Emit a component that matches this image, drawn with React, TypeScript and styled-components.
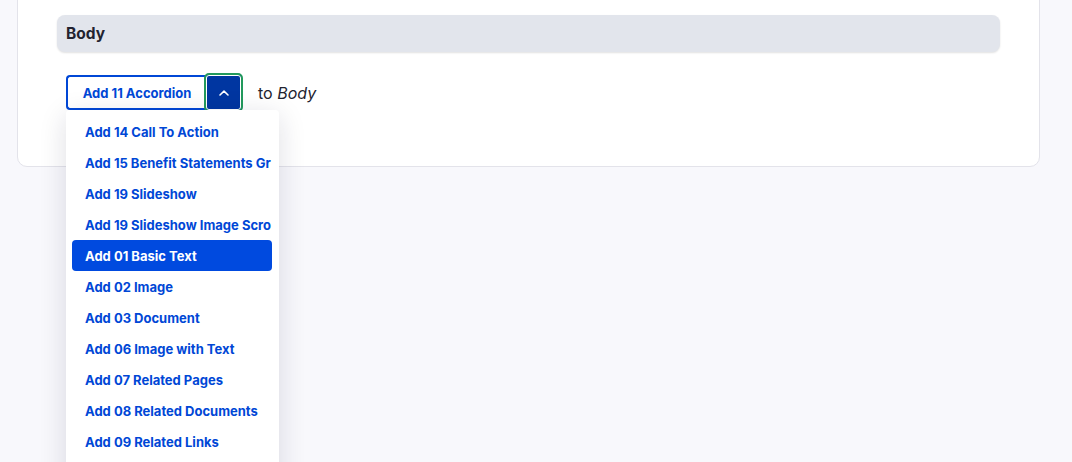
import React from "react";
import styled, { createGlobalStyle } from "styled-components";

const GlobalStyle = createGlobalStyle`
  html, body {
    margin: 0;
    padding: 0;
    background: #f8f8fc;
    font-family: Inter, "Liberation Sans", Arial, sans-serif;
    overflow: hidden;
  }
`;

const Page = styled.div`
  width: 1072px;
  height: 462px;
  overflow: hidden;
`;

const Card = styled.div`
  margin: -10px 0 0 17px;
  width: 1023px;
  box-sizing: border-box;
  background: #fff;
  border: 1px solid #e3e3ea;
  border-radius: 0 0 10px 10px;
  padding: 24px 39px 54px;
`;

const SectionHeader = styled.div`
  height: 37px;
  box-sizing: border-box;
  background: #e2e5ec;
  border-radius: 8px;
  box-shadow: 0 1px 2px rgba(0, 0, 0, 0.12);
  display: flex;
  align-items: center;
  padding-left: 9px;
  font-size: 15.5px;
  font-weight: 700;
  color: #222330;
`;

const ActionRow = styled.div`
  margin-top: 21px;
  padding-left: 9px;
  display: flex;
  align-items: center;
  position: relative;
`;

const SplitButton = styled.div`
  display: flex;
  align-items: center;
`;

const MainButton = styled.button`
  height: 35px;
  width: 140px;
  box-sizing: border-box;
  background: #fff;
  border: 2px solid #0047d6;
  border-right: none;
  border-radius: 4px 0 0 4px;
  color: #0047d6;
  font-family: inherit;
  font-size: 13px;
  font-weight: 700;
  padding: 1px 0 0 0;
  cursor: pointer;
`;

const ToggleButton = styled.button`
  width: 39px;
  height: 39px;
  box-sizing: border-box;
  margin-left: -2px;
  border: 2px solid #22995c;
  border-radius: 5px;
  background: #0036a1;
  box-shadow: inset 0 0 0 1px #fff;
  display: flex;
  align-items: center;
  justify-content: center;
  padding: 0;
  cursor: pointer;
`;

const Target = styled.span`
  margin-left: 15px;
  padding-top: 1px;
  font-size: 16px;
  color: #222330;

  em {
    font-style: italic;
  }
`;

const Menu = styled.div`
  position: absolute;
  top: 37px;
  left: 9px;
  width: 213px;
  min-height: 380px;
  box-sizing: border-box;
  background: #fff;
  border-radius: 4px;
  box-shadow: 0 6px 28px rgba(20, 20, 60, 0.14);
  padding: 6px 7px 6px 6px;
`;

const MenuItem = styled.div<{ $active?: boolean }>`
  height: 31px;
  display: flex;
  align-items: center;
  padding-left: 13px;
  border-radius: 4px;
  background: ${(p) => (p.$active ? "#004adf" : "transparent")};
  color: ${(p) => (p.$active ? "#fff" : "#0047d6")};
  font-size: 13px;
  font-weight: 700;
  white-space: nowrap;
  overflow: hidden;
`;

const items = [
  "Add 14 Call To Action",
  "Add 15 Benefit Statements Gr",
  "Add 19 Slideshow",
  "Add 19 Slideshow Image Scro",
  "Add 01 Basic Text",
  "Add 02 Image",
  "Add 03 Document",
  "Add 06 Image with Text",
  "Add 07 Related Pages",
  "Add 08 Related Documents",
  "Add 09 Related Links",
];

const ChevronUp = () => (
  <svg width="12" height="8" viewBox="0 0 12 8" fill="none">
    <path d="M2 6L6 2.2 10 6" stroke="#fff" strokeWidth="1.6" strokeLinecap="round" strokeLinejoin="round" />
  </svg>
);

export default function App() {
  return (
    <Page>
      <GlobalStyle />
      <Card>
        <SectionHeader>Body</SectionHeader>
        <ActionRow>
          <SplitButton>
            <MainButton>Add 11 Accordion</MainButton>
            <ToggleButton aria-label="Show options">
              <ChevronUp />
            </ToggleButton>
          </SplitButton>
          <Target>
            to <em>Body</em>
          </Target>
          <Menu>
            {items.map((label) => (
              <MenuItem key={label} $active={label === "Add 01 Basic Text"}>
                {label}
              </MenuItem>
            ))}
          </Menu>
        </ActionRow>
      </Card>
    </Page>
  );
}
